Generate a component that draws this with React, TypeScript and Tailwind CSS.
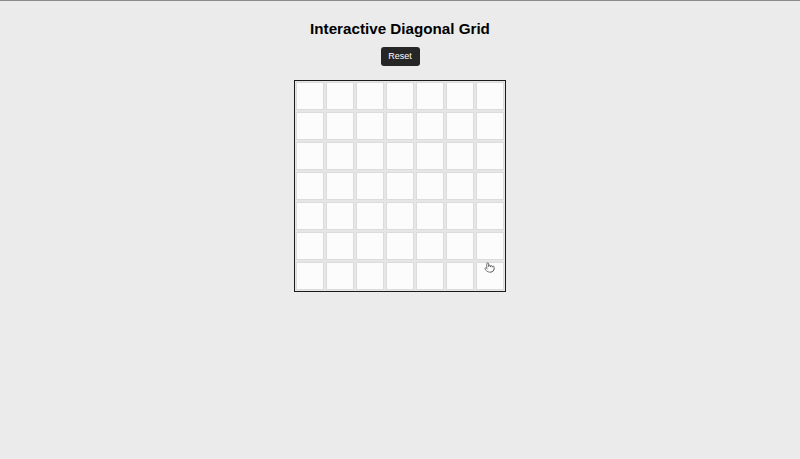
import React from "react";
import { Pointer } from "lucide-react";

export default function App() {
  const cells = Array.from({ length: 49 }, (_, i) => i);
  return (
    <div className="min-h-[459px] w-full bg-[#ebebeb] border-t border-[#8a8a8a] flex flex-col items-center" style={{ fontFamily: '"Liberation Sans", Arial, sans-serif' }}>
      <h1 className="mt-[18px] text-[15.2px] leading-[20px] font-bold text-black">Interactive Diagonal Grid</h1>
      <button className="mt-[8px] h-[19px] w-[39px] rounded-[3px] bg-[#262626] text-white text-[9px] leading-[19px]">Reset</button>
      <div className="relative mt-[14px] border border-[#1a1a1a] bg-[#e6e6e6] p-[1px] grid grid-cols-[repeat(7,28px)] gap-[2px]">
        {cells.map((i) => (
          <div key={i} className="h-[28px] w-[28px] bg-[#fcfcfc] border border-[#dcdcdc]" />
        ))}
        <Pointer className="absolute left-[189px] top-[181px] text-[#444]" size={11} strokeWidth={1.6} fill="white" />
      </div>
    </div>
  );
}
